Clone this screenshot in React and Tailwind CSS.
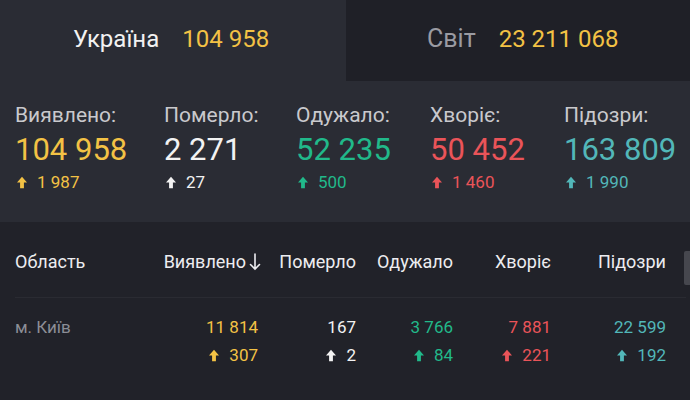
import React from 'react'

const font = { fontFamily: 'Roboto, "Noto Sans", sans-serif' }

const Up = ({ className }) => (
  <svg viewBox="0 0 12 14" className={className} fill="currentColor">
    <path d="M6 0 L12 7 L8.3 7 L8.3 14 L3.7 14 L3.7 7 L0 7 Z" />
  </svg>
)

const stats = [
  { label: 'Виявлено:', value: '104 958', delta: '1 987', color: 'text-[#f3c245]', w: 'w-[149px]' },
  { label: 'Померло:', value: '2 271', delta: '27', color: 'text-[#f2f2f2]', w: 'w-[132px]' },
  { label: 'Одужало:', value: '52 235', delta: '500', color: 'text-[#21b98a]', w: 'w-[134px]' },
  { label: 'Хворіє:', value: '50 452', delta: '1 460', color: 'text-[#ea5459]', w: 'w-[134px]' },
  { label: 'Підозри:', value: '163 809', delta: '1 990', color: 'text-[#52b7b9]', w: 'w-[120px]' },
]

const cols = [
  { title: 'Померло', value: '167', delta: '2', color: 'text-[#f2f2f2]' },
  { title: 'Одужало', value: '3 766', delta: '84', color: 'text-[#21b98a]' },
  { title: 'Хворіє', value: '7 881', delta: '221', color: 'text-[#ea5459]' },
  { title: 'Підозри', value: '22 599', delta: '192', color: 'text-[#52b7b9]' },
]

export default function App() {
  return (
    <div style={font} className="w-[690px] h-[400px] overflow-hidden bg-[#212229] relative">
      {/* Tabs */}
      <div className="flex h-[81px]">
        <div className="w-[346px] bg-[#2a2c34] flex items-center pl-[73px] pb-[4px] text-[24px]">
          <span className="text-[#f2f2f2]">Україна</span>
          <span className="ml-[23px] text-[#f3c245]">104 958</span>
        </div>
        <div className="flex-1 bg-[#1f2027] flex items-center pl-[81px] pb-[4px] text-[24px]">
          <span className="text-[#9a9ba2] text-[25px]">Світ</span>
          <span className="ml-[23px] text-[#f3c245]">23 211 068</span>
        </div>
      </div>

      {/* Totals */}
      <div className="bg-[#2a2c34] h-[141px] flex pl-[15px] pt-[21px]">
        {stats.map((s) => (
          <div key={s.label} className={`${s.w} flex flex-col`}>
            <div className="text-[21px] leading-[26px] text-[#c9c9cd]">{s.label}</div>
            <div className={`text-[31px] leading-[38px] mt-[3px] ${s.color}`}>{s.value}</div>
            <div className={`flex items-center text-[17px] leading-[22px] mt-[2px] ${s.color}`}>
              <Up className="w-[10px] h-[13px] mr-[10px] ml-[2px]" />
              {s.delta}
            </div>
          </div>
        ))}
      </div>

      {/* Table */}
      <div className="pl-[15px] pr-[4px]">
        <div className="grid grid-cols-[145px_98px_98px_97px_98px_115px] h-[76px] items-center pt-[4px] text-[18px] text-[#ededf0] border-b border-[#2a2b32]">
          <div>Область</div>
          <div className="flex items-center justify-end">
            Виявлено
            <svg viewBox="0 0 12 18" className="w-[12px] h-[18px] ml-[3px] -mr-[3px]" fill="none" stroke="currentColor" strokeWidth="1.6" strokeLinecap="round">
              <path d="M6 1 V16 M1.5 11.5 L6 16 L10.5 11.5" />
            </svg>
          </div>
          {cols.map((c) => (
            <div key={c.title} className="text-right">{c.title}</div>
          ))}
        </div>

        <div className="grid grid-cols-[145px_98px_98px_97px_98px_115px] pt-[15px] text-[17px] leading-[28px]">
          <div className="text-[#8c8e96]">м. Київ</div>
          <div className="text-right text-[#f3c245]">
            <div>11 814</div>
            <div className="flex items-center justify-end">
              <Up className="w-[10px] h-[13px] mr-[10px]" />307
            </div>
          </div>
          {cols.map((c) => (
            <div key={c.title} className={`text-right ${c.color}`}>
              <div>{c.value}</div>
              <div className="flex items-center justify-end">
                <Up className="w-[10px] h-[13px] mr-[10px]" />{c.delta}
              </div>
            </div>
          ))}
        </div>
      </div>

      {/* scrollbar */}
      <div className="absolute right-0 top-[251px] w-[6px] h-[34px] bg-[#46474e] rounded-l-[2px]" />
    </div>
  )
}
